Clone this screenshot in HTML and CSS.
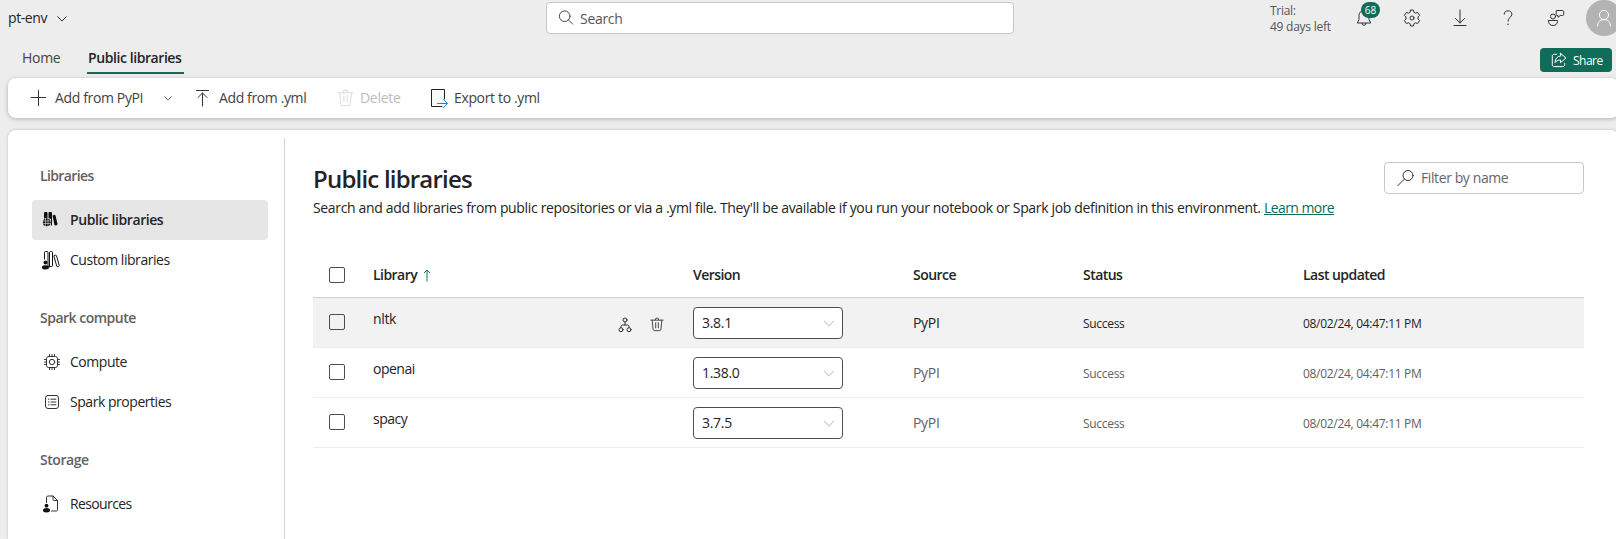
FILE: index.html
```html
<!DOCTYPE html>
<html lang="en">
<head>
<meta charset="utf-8">
<title>pt-env - Public libraries</title>
<link rel="stylesheet" href="styles.css">
</head>
<body>
<svg class="defs" aria-hidden="true">
  <symbol id="chevron" viewBox="0 0 10 6"><path d="M.7.7 5 5 9.3.7"/></symbol>
  <symbol id="trash" viewBox="0 0 16 16"><path d="M1 3h14M5.800 2.800a2.200 2.200 0 0 1 4.400 0M2.500 3.200l1 10.200c.1.900.7 1.600 1.600 1.600h5.800c.9 0 1.500-.7 1.600-1.600l1-10.200M6.500 6v5.800M9.500 6v5.800"/></symbol>
</svg>
<header class="topbar">
  <div class="env"><span class="env-name">pt-env</span><svg class="icon chev"><use href="#chevron"/></svg></div>
  <div class="search">
    <svg class="icon" width="16" height="16" viewBox="0 0 16 16"><circle cx="6.7" cy="6.2" r="5.3"/><path d="m10.5 10 4.200 4.200"/></svg>
    <span class="search-label">Search</span>
  </div>
  <div class="tools">
    <div class="trial"><div class="trial-a">Trial:</div><div class="trial-b">49 days left</div></div>
    <div class="tool bell">
      <svg class="icon" width="16" height="18" viewBox="0 0 16 18"><path d="M8 1.3a5 5 0 0 0-5 5v4.2L1.3 14h13.4L13 10.500V6.300a5 5 0 0 0-5-5zM6 14.300a2 2 0 0 0 4 0"/></svg>
      <span class="badge">68</span>
    </div>
    <div class="tool"><svg class="icon" width="18" height="18" viewBox="0 0 18 18"><path d="M7.600 1h2.800l.5 2.300 1.500.9 2.300-.7 1.900 2.900L15 8v2l1.600 1.600-1.900 2.900-2.300-.7-1.500.9-.5 2.300H7.600l-.5-2.300-1.500-.9-2.300.7-1.900-2.900L3 10V8L1.400 6.400l1.900-2.900 2.300.7 1.500-.9z"/><circle cx="9" cy="9" r="2"/></svg></div>
    <div class="tool"><svg class="icon" width="14" height="18" viewBox="0 0 14 18"><path d="M7 1v13M2.500 9.500 7 14l4.500-4.500M1 16.500h12"/></svg></div>
    <div class="tool"><svg class="icon" width="10" height="16" viewBox="0 0 10 16"><path d="M1.200 4.200C1.200 2 2.800.8 5 .8s3.900 1.300 3.900 3.500C8.900 7 5 7.600 5 11.200"/><circle class="dot" cx="5" cy="14.300" r=".8"/></svg></div>
    <div class="tool"><svg class="icon" width="18" height="18" viewBox="0 0 18 18"><circle cx="6" cy="7.500" r="2.500"/><path d="M1.500 11.500h9v1c0 2.400-2 4-4.500 4s-4.500-1.600-4.500-4zM10 1.500h5.500c.8 0 1.200.5 1.200 1.200v2.600c0 .8-.4 1.200-1.200 1.200h-2.200L11 8.300V6.500h-1c-.5 0-.8-.4-.8-.9V2.500c0-.6.300-1 .8-1z"/></svg></div>
  </div>
  <div class="avatar"><svg class="icon" width="16" height="18" viewBox="0 0 16 18"><circle cx="8" cy="6" r="4.600"/><path d="M1.500 17c0-3.700 2.500-6.400 6.500-6.400s6.500 2.700 6.500 6.400"/></svg></div>
</header>

<nav class="tabs">
  <a class="tab tab-home">Home</a>
  <a class="tab tab-active">Public libraries</a>
  <button class="share"><svg class="icon" width="16" height="16" viewBox="0 0 16 16"><path d="M5.500 2.300H3.300C2 2.300 1.300 3 1.300 4.200v8.500c0 1.200.7 1.900 2 1.900h8.400c1.300 0 2-.7 2-1.900v-1.200"/><path d="M9.500 1.300 15 6l-5.500 4.600V8C7 8 5.300 8.700 4 10.700 4.200 7 6 4.200 9.500 3.900z"/></svg><span>Share</span></button>
</nav>

<div class="toolbar">
  <div class="cmd cmd-pypi"><svg class="icon" width="16" height="16" viewBox="0 0 16 16"><path d="M8.500 .5v15M1 7.500h15"/></svg><span>Add from PyPI</span><svg class="icon chev-sm"><use href="#chevron"/></svg></div>
  <div class="cmd cmd-yml"><svg class="icon" width="14" height="18" viewBox="0 0 14 18"><path d="M1.500 1.500h12M7.500 17V4M3 8.500 7.500 4 12 8.500"/></svg><span>Add from .yml</span></div>
  <div class="cmd cmd-delete"><svg class="icon" width="17" height="18"><use href="#trash"/></svg><span>Delete</span></div>
  <div class="cmd cmd-export"><svg class="icon" width="18" height="20" viewBox="0 0 18 20"><path class="sheet" d="M14.500 11V1.500h-13v17H12"/><path class="arrow" d="M7.500 15.500H17M13.500 11.500l4 4-4 4"/></svg><span>Export to .yml</span></div>
</div>

<div class="panel">
  <aside class="sidebar">
    <section>
      <h2 class="w-libs">Libraries</h2>
      <a class="nav nav-active"><svg class="icon solid" width="20" height="20" viewBox="0 0 20 20"><path d="M2 3q0-1 1-1h1.500q1 0 1 1v5.500H2zM6.500 3q0-1 1-1H9q1 0 1 1v12.500H9V9L6.500 8zM10.500 5.500l2-.7q.8 0 1 .7l2 8.500q0 1-.8 1.300l-1.300.3q-.8 0-1-.8z"/><circle cx="4.800" cy="12.300" r="3.900"/><path class="grid" d="M1 11h7.500M1 13.500h7.500M3.500 8.500V16M6 8.500V16"/></svg><span class="w-public">Public libraries</span></a>
      <a class="nav"><svg class="icon books" width="20" height="20" viewBox="0 0 20 20"><path d="M2.500 9V2.500q0-1 1-1H5q1 0 1 1v13.500M7.500 16.500V2.500q0-1 1-1H9.500q1 0 1 1v13q0 1-1 1h-2M12.300 5.500l1.200-.4q.8 0 1 .6l2.700 9.600q0 1-.8 1.300l-.7.2q-.8 0-1-.8L12 6.500z"/><g class="solid"><circle cx="3.500" cy="12.500" r="2"/><ellipse cx="3.500" cy="17.300" rx="3.700" ry="2.100"/></g></svg><span class="w-custom">Custom libraries</span></a>
    </section>
    <section>
      <h2 class="w-spark">Spark compute</h2>
      <a class="nav"><svg class="icon" width="20" height="20" viewBox="0 0 20 20"><rect x="4.500" y="4.500" width="11" height="11" rx="2.200"/><circle cx="10" cy="10" r="2.700"/><path d="M7.500 4.500V2.500M10 4.500V2.500M12.500 4.500V2.500M7.500 17.500v-2M10 17.500v-2M12.500 17.500v-2M2.500 7.500h2M2.500 10h2M2.500 12.500h2M15.500 7.500h2M15.500 10h2M15.500 12.500h2"/></svg><span class="w-compute">Compute</span></a>
      <a class="nav"><svg class="icon" width="20" height="20" viewBox="0 0 20 20"><rect x="3.500" y="3.500" width="13" height="13" rx="2.500"/><path d="M9 7.200h5M9 10h5M9 12.800h5M6.500 7.200h.6M6.500 10h.6M6.500 12.800h.6"/></svg><span class="w-props">Spark properties</span></a>
    </section>
    <section>
      <h2 class="w-storage">Storage</h2>
      <a class="nav"><svg class="icon" width="20" height="20" viewBox="0 0 20 20"><path d="M4.500 8.500V3.500q0-1.500 1.500-1.500h5l4.500 4.500v9.300q0 1.200-1.200 1.200H9.500M11 2v3.500q0 1 1 1h3.500"/><g class="solid"><circle cx="4.500" cy="11.700" r="1.900"/><ellipse cx="4.500" cy="16.300" rx="3.500" ry="2.200"/></g></svg><span class="w-res">Resources</span></a>
    </section>
  </aside>

  <main class="content">
    <div class="heading">
      <div>
        <h1>Public libraries</h1>
        <p class="intro"><span class="intro-text">Search and add libraries from public repositories or via a .yml file. They'll be available if you run your notebook or Spark job definition in this environment.</span> <a class="learn">Learn more</a></p>
      </div>
      <div class="filter"><svg class="icon" width="18" height="18" viewBox="0 0 18 18"><circle cx="11" cy="6.500" r="5"/><path d="M7.300 10.200 .8 16.700"/></svg><span>Filter by name</span></div>
    </div>
    <div class="table">
      <div class="row head">
        <span class="check"></span>
        <span class="h-lib">Library<svg class="sort" width="8" height="13" viewBox="0 0 8 13"><path d="M4 12.500V1M1 4l3-3 3 3"/></svg></span>
        <span></span><span>Version</span><span>Source</span><span>Status</span><span>Last updated</span>
      </div>
      <div class="row hover">
        <span class="check"></span><span class="name">nltk</span>
        <span class="actions">
          <svg class="icon" width="14" height="16" viewBox="0 0 14 16"><circle cx="7" cy="3" r="2"/><circle cx="3" cy="12.700" r="2"/><circle cx="11" cy="12.700" r="2"/><path d="M7 5v3M3 10.700V9.500Q3 8 4.500 8h5Q11 8 11 9.500v1.200"/></svg>
          <svg class="icon" width="14" height="15"><use href="#trash"/></svg>
        </span>
        <span class="select"><span>3.8.1</span><svg class="caret"><use href="#chevron"/></svg></span>
        <span class="src">PyPI</span><span class="small status">Success</span><span class="small date">08/02/24, 04:47:11 PM</span>
      </div>
      <div class="row">
        <span class="check"></span><span class="name">openai</span><span></span>
        <span class="select"><span>1.38.0</span><svg class="caret"><use href="#chevron"/></svg></span>
        <span class="src">PyPI</span><span class="small status">Success</span><span class="small date">08/02/24, 04:47:11 PM</span>
      </div>
      <div class="row">
        <span class="check"></span><span class="name">spacy</span><span></span>
        <span class="select"><span>3.7.5</span><svg class="caret"><use href="#chevron"/></svg></span>
        <span class="src">PyPI</span><span class="small status">Success</span><span class="small date">08/02/24, 04:47:11 PM</span>
      </div>
    </div>
  </main>
</div>
</body>
</html>
```
FILE: styles.css
```css
* { box-sizing: border-box; }
body {
  margin: 0; width: 1616px; height: 539px; overflow: hidden;
  background: #ededed; color: #242424;
  font: 14px/20px "Open Sans", "Noto Sans", sans-serif;
  letter-spacing: -0.3px;
}
h1, h2, p { margin: 0; }
span { white-space: nowrap; }
.defs { position: absolute; width: 0; height: 0; }
.icon { display: block; flex: none; fill: none; stroke: #333; stroke-width: 1; stroke-linecap: round; stroke-linejoin: round; }
.solid, .icon.solid { fill: #111; stroke: none; }
.books { stroke: #111; }
.grid { stroke: #e6e6e6; stroke-width: .6; }
.dot { fill: #333; stroke: none; }

.topbar { display: grid; grid-template-columns: 546px 468px 572px 36px; height: 36px; }
.env { display: flex; align-items: center; gap: 10px; padding-left: 8px; letter-spacing: -0.4px; }
.chev { width: 10px; height: 6px; margin-top: 2px; }
.search { display: flex; align-items: center; gap: 6px; height: 32px; margin-top: 2px; padding-left: 11px; background: #fff; border: 1px solid #c7c7c7; border-radius: 4px; color: #555; }
.search-label { padding-top: 2px; }
.search .icon { stroke: #444; }
.tools { display: flex; padding-left: 256px; }
.trial { width: 70px; padding-top: 3px; font-size: 12px; line-height: 16px; color: #555; white-space: nowrap; }
.trial-b { letter-spacing: -0.25px; }
.tool { display: flex; align-items: center; justify-content: center; width: 48px; }
.bell { position: relative; }
.badge { position: absolute; left: 21px; top: 2px; width: 19px; height: 16px; border-radius: 8px; background: #0f6c58; color: #fff; font-size: 10px; line-height: 16px; text-align: center; letter-spacing: 0; }
.avatar { display: flex; align-items: center; justify-content: center; width: 36px; height: 36px; border-radius: 50%; background: #b3b3b3; }
.avatar .icon { stroke: #fff; }

.tabs { display: flex; align-items: flex-start; height: 42px; padding: 12px 4px 0 22px; }
.tab { height: 26px; color: #424242; white-space: nowrap; }
.tab-home { width: 65px; }
.tab-active { width: 97px; padding-left: 1px; color: #242424; font-weight: 600; letter-spacing: -0.42px; border-bottom: 2px solid #0f6c58; }
.share { display: flex; align-items: center; gap: 6px; width: 72px; height: 24px; margin-left: auto; padding: 0 0 0 11px; border: 0; border-radius: 4px; background: #0f6c58; color: #fff; font: 12px/16px "Open Sans", sans-serif; letter-spacing: -0.5px; }
.share span { padding-top: 1px; }
.share .icon { stroke: #fff; }

.toolbar { display: flex; align-items: center; height: 40px; margin: 0 -3px 12px 8px; padding-left: 22px; background: #fff; border-radius: 8px; box-shadow: 0 1px 4px rgba(0,0,0,.25); color: #424242; }
.cmd { display: flex; align-items: center; gap: 9px; }
.cmd-pypi { width: 165px; letter-spacing: -0.36px; }
.chev-sm { width: 8px; height: 5px; margin-left: 12px; }
.cmd-yml { width: 142px; gap: 10px; letter-spacing: -0.38px; }
.cmd-delete { width: 93px; color: #bdbdbd; gap: 6px; }
.cmd-delete .icon { stroke: #dcdcdc; }
.cmd-export { gap: 6px; letter-spacing: -0.35px; }
.sheet { fill: #fafafa; stroke: #222; }
.arrow { stroke: #1a86d9; }

.panel { display: flex; height: 409px; margin: 0 -3px 0 8px; background: #fff; border-radius: 8px 8px 0 0; box-shadow: 0 0 3px rgba(0,0,0,.22); }
.sidebar { flex: none; width: 277px; margin-top: 8px; padding: 14px 16px 0 24px; border-right: 1px solid #d6d6d6; }
.sidebar section { margin-bottom: 14px; }
.sidebar h2 { height: 48px; padding-left: 8px; font-size: 14px; line-height: 48px; font-weight: 600; color: #616161; }
.sidebar .w-libs { letter-spacing: -0.62px; }
.sidebar .w-spark { letter-spacing: -0.5px; }
.sidebar .w-storage { letter-spacing: -0.45px; }
.nav { display: flex; align-items: center; gap: 8px; height: 40px; padding-left: 10px; border-radius: 4px; letter-spacing: -0.46px; }
.nav .w-public { letter-spacing: -0.43px; }
.nav .w-res { letter-spacing: -0.62px; }
.nav-active { background: #e6e6e6; font-weight: 600; }

.content { flex: none; width: 1271px; margin-left: 28px; }
.heading { display: flex; justify-content: space-between; height: 123px; padding-top: 32px; }
h1 { padding-top: 1px; font-size: 24px; line-height: 32px; font-weight: 600; letter-spacing: -0.8px; }
.intro { margin-top: 3px; white-space: nowrap; }
.intro-text { letter-spacing: -0.34px; }
.learn { color: #0f6c58; text-decoration: underline; letter-spacing: -0.58px; }
.filter { display: flex; align-items: center; gap: 6px; width: 200px; height: 32px; padding-left: 12px; border: 1px solid #c7c7c7; border-radius: 4px; color: #666; letter-spacing: -0.4px; }
.row { display: grid; grid-template-columns: 60px 245px 75px 220px 170px 220px 1fr; align-items: center; height: 50px; border-bottom: 1px solid #ededed; color: #616161; }
.head { height: 45px; border-color: #d1d1d1; color: #242424; font-weight: 600; letter-spacing: -0.55px; }
.check { width: 16px; height: 16px; margin-left: 16px; border: 1px solid #4d4d4d; border-radius: 2px; background: #fff; }
.row:not(.head) .check { margin-bottom: 1px; }
.hover { background: #f2f2f2; color: #242424; }
.hover .check { background: transparent; }
.sort { fill: none; stroke: #0f7b64; vertical-align: -2px; margin-left: 6px; }
.name { color: #242424; padding-bottom: 7px; letter-spacing: -0.5px; }
.hover .name { letter-spacing: -0.35px; }
.actions { display: flex; gap: 18px; padding-top: 4px; }
.select { display: flex; align-items: center; justify-content: space-between; width: 150px; height: 32px; margin-top: 1px; padding: 0 7px 0 8px; border: 1px solid #4d4d4d; border-radius: 4px; background: #fff; color: #242424; }
.caret { width: 12px; height: 7px; fill: none; stroke: #ccc; }
.src { padding-top: 1px; }
.small { padding-top: 2px; font-size: 12px; }
```
